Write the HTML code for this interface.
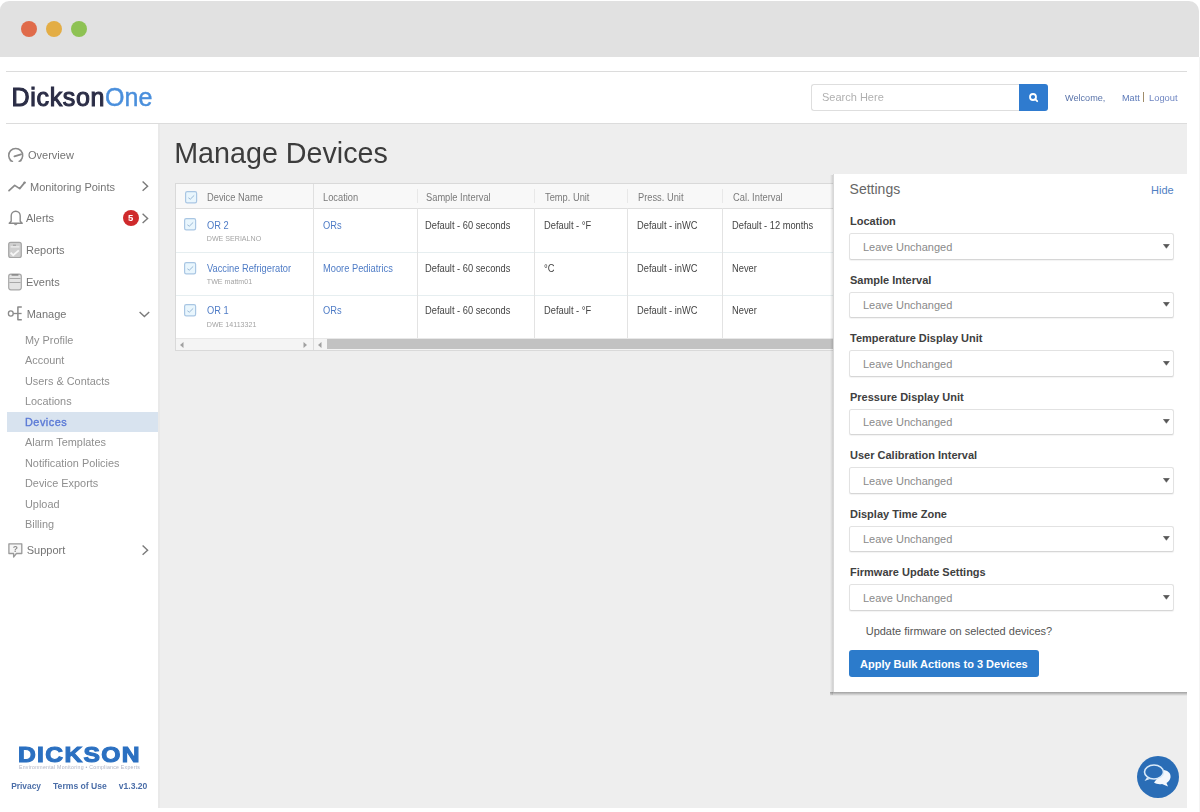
<!DOCTYPE html>
<html><head><meta charset="utf-8"><style>
html,body{margin:0;padding:0;}
body{width:1200px;height:812px;position:relative;overflow:hidden;background:#fff;font-family:"Liberation Sans", sans-serif;}
.t{position:absolute;white-space:nowrap;}
.r{position:absolute;box-sizing:border-box;}
</style></head><body><div id="root" style="position:absolute;left:0;top:0;width:1200px;height:812px;filter:blur(0.4px);">
<div class="r" style="left:0px;top:1px;width:1199px;height:56px;background:#e1e1e1;border-radius:9px 10px 0 0;"></div>
<div class="r" style="left:20.7px;top:20.7px;width:16.6px;height:16.6px;background:#e06b4a;border-radius:50%;"></div>
<div class="r" style="left:45.7px;top:20.7px;width:16.6px;height:16.6px;background:#e3ad45;border-radius:50%;"></div>
<div class="r" style="left:70.7px;top:20.7px;width:16.6px;height:16.6px;background:#8ec253;border-radius:50%;"></div>
<div class="r" style="left:1199px;top:57px;width:1px;height:755px;background:#f4f4f4;"></div>
<div class="r" style="left:6px;top:71px;width:1181px;height:1px;background:#dcdcdc;"></div>
<div class="r" style="left:6px;top:123px;width:1181px;height:1px;background:#dcdcdc;"></div>
<div class="t" style="left:11.60px;top:84.54px;font-size:25px;line-height:25px;font-weight:400;color:#2a2c45;"><span style="color:#2b2d46;-webkit-text-stroke:1.05px #2b2d46;letter-spacing:0.65px">Dickson</span><span style="color:#4a8fdc;-webkit-text-stroke:0.45px #4a8fdc">One</span></div>
<div class="r" style="left:811px;top:84px;width:208px;height:26px;background:#fff;border:1px solid #dedede;border-right:none;border-radius:3px 0 0 3px;box-sizing:border-box;width:208px;height:27px;"></div>
<div class="t" style="left:822.00px;top:91.69px;font-size:11px;line-height:11px;font-weight:400;color:#b0b0b0;">Search Here</div>
<div class="r" style="left:1019px;top:84px;width:29px;height:27px;background:#2f7bcf;border-radius:0 3px 3px 0;"></div>
<svg class="r" style="left:1027px;top:91px;" width="13" height="13" viewBox="0 0 13 13"><circle cx="6" cy="6" r="3" fill="none" stroke="#fff" stroke-width="1.8"/><line x1="8.2" y1="8.2" x2="10.2" y2="10.2" stroke="#fff" stroke-width="1.8" stroke-linecap="round"/></svg>
<div class="t" style="left:1065.00px;top:92.59px;font-size:9.7px;line-height:9.7px;font-weight:400;color:#5a74aa;transform:scaleX(0.94);transform-origin:0 0;">Welcome,</div>
<div class="t" style="left:1122.00px;top:92.59px;font-size:9.7px;line-height:9.7px;font-weight:400;color:#5a78b8;transform:scaleX(0.94);transform-origin:0 0;">Matt</div>
<div class="r" style="left:1143px;top:92px;width:1.3px;height:9.5px;background:#a08c6a;"></div>
<div class="t" style="left:1148.70px;top:92.59px;font-size:9.7px;line-height:9.7px;font-weight:400;color:#6f86c2;transform:scaleX(0.965);transform-origin:0 0;">Logout</div>
<div class="r" style="left:158px;top:124px;width:1029px;height:684px;background:#eeeeee;"></div>
<div class="r" style="left:158px;top:124px;width:2.2px;height:684px;background:#e9e9e9;"></div>
<div class="t" style="left:28.00px;top:150.09px;font-size:11px;line-height:11px;font-weight:400;color:#747474;">Overview</div>
<div class="t" style="left:30.00px;top:181.79px;font-size:11px;line-height:11px;font-weight:400;color:#747474;">Monitoring Points</div>
<div class="t" style="left:26.00px;top:213.49px;font-size:11px;line-height:11px;font-weight:400;color:#747474;">Alerts</div>
<div class="t" style="left:26.00px;top:245.19px;font-size:11px;line-height:11px;font-weight:400;color:#747474;">Reports</div>
<div class="t" style="left:26.00px;top:276.89px;font-size:11px;line-height:11px;font-weight:400;color:#747474;">Events</div>
<div class="t" style="left:26.70px;top:308.59px;font-size:11px;line-height:11px;font-weight:400;color:#747474;">Manage</div>
<svg class="r" style="left:0;top:0" width="158" height="600" viewBox="0 0 158 600">
<path d="M11.2 160.8 A7 7 0 1 1 20.2 160.8" fill="none" stroke="#8a8a8a" stroke-width="1.5" stroke-linecap="round"/>
<path d="M10.2 160.6 L12.6 161.4 M19 161.4 L21.2 160.6" stroke="#8a8a8a" stroke-width="1.3" stroke-linecap="round"/>
<path d="M14.4 156.3 L21 154.4" stroke="#8a8a8a" stroke-width="1.8" stroke-linecap="round"/>
<polyline points="9,190.6 14.7,185.4 19.7,188.6 24.6,182.6" fill="none" stroke="#8a8a8a" stroke-width="1.7" stroke-linejoin="round" stroke-linecap="round"/>
<circle cx="24.6" cy="182.6" r="1.2" fill="#8a8a8a"/>
<path d="M9.2 223.2 L11.2 221.2 L11.2 215.8 A4.5 4.5 0 0 1 20.2 215.8 L20.2 221.2 L22.2 223.2 Z" fill="none" stroke="#8a8a8a" stroke-width="1.4" stroke-linejoin="round"/>
<path d="M14.2 224 A1.6 1.2 0 0 0 17.2 224" fill="#8a8a8a" stroke="#8a8a8a" stroke-width="0.8"/>
<rect x="8.7" y="242.4" width="12.6" height="15.1" rx="2" fill="#cfcfcf" stroke="#a5a5a5" stroke-width="1.2"/>
<path d="M10.6 246.9 L19.4 246.9" stroke="#f4f4f4" stroke-width="1.1"/>
<path d="M13 245.2 L16 245.2" stroke="#9a9a9a" stroke-width="1"/>
<polyline points="10.6,252.6 13.2,255.2 18.8,250.4" fill="none" stroke="#f6f6f6" stroke-width="1.8"/>
<rect x="8.7" y="274.2" width="12.6" height="15.6" rx="2.2" fill="#e4e4e4" stroke="#a8a8a8" stroke-width="1.2"/>
<path d="M12.2 274.8 L17.8 274.8" stroke="#8c8c8c" stroke-width="1.8" stroke-linecap="round"/>
<path d="M9.4 278.5 L20.6 278.5 M9.4 282.5 L20.6 282.5" stroke="#a8a8a8" stroke-width="1"/>
<ellipse cx="10.8" cy="313.5" rx="2.4" ry="2.6" fill="none" stroke="#8a8a8a" stroke-width="1.3"/>
<path d="M13.2 313.5 L21.6 313.5" stroke="#8a8a8a" stroke-width="1.3"/>
<path d="M21.8 307.1 L17.9 307.1 L17.9 319.8 L21.8 319.8" fill="none" stroke="#8a8a8a" stroke-width="1.5" stroke-linejoin="round"/>
<path d="M8.9 543.8 L21.8 543.8 L21.8 553.5 L16.4 553.5 L13.6 557 L13.6 553.5 L8.9 553.5 Z" fill="#f6f6f6" stroke="#9a9a9a" stroke-width="1.3" stroke-linejoin="round"/>
<text x="15.4" y="551.6" font-size="8.5" font-family="Liberation Sans" font-weight="700" fill="#8a8a8a" text-anchor="middle">?</text>
<polyline points="142.6,181.6 147.6,186.2 142.6,190.8" fill="none" stroke="#7a7a7a" stroke-width="1.4"/>
<polyline points="142.6,213.8 147.6,218.4 142.6,223" fill="none" stroke="#7a7a7a" stroke-width="1.4"/>
<polyline points="142.6,545.6 147.6,550.2 142.6,554.8" fill="none" stroke="#7a7a7a" stroke-width="1.4"/>
<polyline points="139.6,312 144.4,316.6 149.2,312" fill="none" stroke="#7a7a7a" stroke-width="1.4"/>
</svg>
<div class="r" style="left:122.7px;top:210px;width:16px;height:16px;background:#cf2a2c;border-radius:50%;"></div>
<div class="t" style="left:127.90px;top:213.46px;font-size:9.5px;line-height:9.5px;font-weight:700;color:#fff;">5</div>
<div class="r" style="left:6.5px;top:412px;width:151.5px;height:20px;background:#d8e3ef;"></div>
<div class="t" style="left:25.00px;top:334.67px;font-size:10.9px;line-height:10.9px;font-weight:400;color:#8f8f8f;">My Profile</div>
<div class="t" style="left:25.00px;top:355.17px;font-size:10.9px;line-height:10.9px;font-weight:400;color:#8f8f8f;">Account</div>
<div class="t" style="left:25.00px;top:375.67px;font-size:10.9px;line-height:10.9px;font-weight:400;color:#8f8f8f;">Users &amp; Contacts</div>
<div class="t" style="left:25.00px;top:396.17px;font-size:10.9px;line-height:10.9px;font-weight:400;color:#8f8f8f;">Locations</div>
<div class="t" style="left:25.00px;top:416.67px;font-size:10.9px;line-height:10.9px;font-weight:400;color:#5a79d6;-webkit-text-stroke:0.35px #5a79d6;letter-spacing:0.5px;">Devices</div>
<div class="t" style="left:25.00px;top:437.17px;font-size:10.9px;line-height:10.9px;font-weight:400;color:#8f8f8f;">Alarm Templates</div>
<div class="t" style="left:25.00px;top:457.67px;font-size:10.9px;line-height:10.9px;font-weight:400;color:#8f8f8f;">Notification Policies</div>
<div class="t" style="left:25.00px;top:478.17px;font-size:10.9px;line-height:10.9px;font-weight:400;color:#8f8f8f;">Device Exports</div>
<div class="t" style="left:25.00px;top:498.67px;font-size:10.9px;line-height:10.9px;font-weight:400;color:#8f8f8f;">Upload</div>
<div class="t" style="left:25.00px;top:519.17px;font-size:10.9px;line-height:10.9px;font-weight:400;color:#8f8f8f;">Billing</div>
<div class="t" style="left:26.70px;top:545.29px;font-size:11px;line-height:11px;font-weight:400;color:#747474;">Support</div>
<div class="t" style="left:18.40px;top:743.91px;font-size:22.2px;line-height:22.2px;font-weight:700;color:#2b70c1;-webkit-text-stroke:1.1px #2b70c1;letter-spacing:1.2px;transform:scaleX(1.11);transform-origin:0 0;">DICKSON</div>
<div class="t" style="left:19.00px;top:764.90px;font-size:5.2px;line-height:5.2px;font-weight:400;color:#b0b4c4;letter-spacing:0.25px;">Environmental Monitoring • Compliance Experts</div>
<div class="t" style="left:11.20px;top:781.89px;font-size:8.4px;line-height:8.4px;font-weight:700;color:#4b6ea8;">Privacy</div>
<div class="t" style="left:53.00px;top:781.72px;font-size:8.6px;line-height:8.6px;font-weight:700;color:#4b6ea8;">Terms of Use</div>
<div class="t" style="left:118.70px;top:781.72px;font-size:8.6px;line-height:8.6px;font-weight:700;color:#4b6ea8;">v1.3.20</div>
<div class="t" style="left:174.20px;top:138.81px;font-size:28.7px;line-height:28.7px;font-weight:400;color:#3c3c3c;">Manage Devices</div>
<div class="r" style="left:175px;top:183px;width:660px;height:168px;background:#fff;border:1px solid #d9d9d9;"></div>
<div class="r" style="left:176px;top:184px;width:658px;height:24.5px;background:#f8f8f8;border-bottom:1px solid #dddddd;"></div>
<div class="r" style="left:176px;top:252px;width:658px;height:1px;background:#e6eef0;"></div>
<div class="r" style="left:176px;top:295px;width:658px;height:1px;background:#e6eef0;"></div>
<div class="r" style="left:313px;top:208px;width:1px;height:130px;background:#e3e3e3;"></div>
<div class="r" style="left:417px;top:208px;width:1px;height:130px;background:#e3e3e3;"></div>
<div class="r" style="left:534px;top:208px;width:1px;height:130px;background:#e3e3e3;"></div>
<div class="r" style="left:627px;top:208px;width:1px;height:130px;background:#e3e3e3;"></div>
<div class="r" style="left:722px;top:208px;width:1px;height:130px;background:#e3e3e3;"></div>
<div class="r" style="left:313px;top:184px;width:1.2px;height:24px;background:#e0e0e0;"></div>
<div class="r" style="left:417px;top:189px;width:1px;height:14px;background:#e8e8e8;"></div>
<div class="r" style="left:534px;top:189px;width:1px;height:14px;background:#e8e8e8;"></div>
<div class="r" style="left:627px;top:189px;width:1px;height:14px;background:#e8e8e8;"></div>
<div class="r" style="left:722px;top:189px;width:1px;height:14px;background:#e8e8e8;"></div>
<div class="r" style="left:176px;top:338px;width:658px;height:12px;background:#f4f4f4;border-top:1px solid #e8e8e8;"></div>
<div class="r" style="left:313px;top:338px;width:1.2px;height:12px;background:#dcdcdc;"></div>
<div class="r" style="left:327px;top:339px;width:510px;height:10px;background:#c2c2c2;"></div>
<svg class="r" style="left:179px;top:341px;" width="6" height="8" viewBox="0 0 6 8"><polygon points="4.5,1 1,4 4.5,7" fill="#a0a0a0"/></svg>
<svg class="r" style="left:302px;top:341px;" width="6" height="8" viewBox="0 0 6 8"><polygon points="1.5,1 5,4 1.5,7" fill="#a0a0a0"/></svg>
<svg class="r" style="left:317px;top:341px;" width="6" height="8" viewBox="0 0 6 8"><polygon points="4.5,1 1,4 4.5,7" fill="#a0a0a0"/></svg>
<svg class="r" style="left:185.1px;top:191.2px;" width="13" height="13" viewBox="0 0 13 13"><rect x="0.6" y="0.6" width="11" height="11.2" rx="1.6" fill="#e9f6fd" stroke="#a9c6e3" stroke-width="1.2"/><polyline points="3.4,6.8 5.3,8.2 9.2,4.4" fill="none" stroke="#9ab8d6" stroke-width="1"/></svg>
<svg class="r" style="left:184.4px;top:217.8px;" width="13" height="13" viewBox="0 0 13 13"><rect x="0.6" y="0.6" width="11" height="11.2" rx="1.6" fill="#e9f6fd" stroke="#a9c6e3" stroke-width="1.2"/><polyline points="3.4,6.8 5.3,8.2 9.2,4.4" fill="none" stroke="#9ab8d6" stroke-width="1"/></svg>
<svg class="r" style="left:184.2px;top:262.1px;" width="13" height="13" viewBox="0 0 13 13"><rect x="0.6" y="0.6" width="11" height="11.2" rx="1.6" fill="#e9f6fd" stroke="#a9c6e3" stroke-width="1.2"/><polyline points="3.4,6.8 5.3,8.2 9.2,4.4" fill="none" stroke="#9ab8d6" stroke-width="1"/></svg>
<svg class="r" style="left:184.2px;top:304.2px;" width="13" height="13" viewBox="0 0 13 13"><rect x="0.6" y="0.6" width="11" height="11.2" rx="1.6" fill="#e9f6fd" stroke="#a9c6e3" stroke-width="1.2"/><polyline points="3.4,6.8 5.3,8.2 9.2,4.4" fill="none" stroke="#9ab8d6" stroke-width="1"/></svg>
<div class="t" style="left:207.30px;top:193.03px;font-size:10px;line-height:10px;font-weight:400;color:#7a7a7a;transform:scaleX(0.93);transform-origin:0 0;">Device Name</div>
<div class="t" style="left:323.00px;top:193.03px;font-size:10px;line-height:10px;font-weight:400;color:#7a7a7a;transform:scaleX(0.93);transform-origin:0 0;">Location</div>
<div class="t" style="left:426.00px;top:193.03px;font-size:10px;line-height:10px;font-weight:400;color:#7a7a7a;transform:scaleX(0.93);transform-origin:0 0;">Sample Interval</div>
<div class="t" style="left:544.70px;top:193.03px;font-size:10px;line-height:10px;font-weight:400;color:#7a7a7a;transform:scaleX(0.93);transform-origin:0 0;">Temp. Unit</div>
<div class="t" style="left:638.00px;top:193.03px;font-size:10px;line-height:10px;font-weight:400;color:#7a7a7a;transform:scaleX(0.93);transform-origin:0 0;">Press. Unit</div>
<div class="t" style="left:732.70px;top:193.03px;font-size:10px;line-height:10px;font-weight:400;color:#7a7a7a;transform:scaleX(0.93);transform-origin:0 0;">Cal. Interval</div>
<div class="t" style="left:206.50px;top:220.73px;font-size:10px;line-height:10px;font-weight:400;color:#4f7cc6;transform:scaleX(0.93);transform-origin:0 0;">OR 2</div>
<div class="t" style="left:206.80px;top:236.29px;font-size:7.1px;line-height:7.1px;font-weight:400;color:#a4a4a4;">DWE SERIALNO</div>
<div class="t" style="left:322.70px;top:220.73px;font-size:10px;line-height:10px;font-weight:400;color:#4f7cc6;transform:scaleX(0.93);transform-origin:0 0;">ORs</div>
<div class="t" style="left:425.40px;top:220.73px;font-size:10px;line-height:10px;font-weight:400;color:#444;transform:scaleX(0.93);transform-origin:0 0;">Default - 60 seconds</div>
<div class="t" style="left:544.30px;top:220.73px;font-size:10px;line-height:10px;font-weight:400;color:#444;transform:scaleX(0.93);transform-origin:0 0;">Default - °F</div>
<div class="t" style="left:637.30px;top:220.73px;font-size:10px;line-height:10px;font-weight:400;color:#444;transform:scaleX(0.93);transform-origin:0 0;">Default - inWC</div>
<div class="t" style="left:731.80px;top:220.73px;font-size:10px;line-height:10px;font-weight:400;color:#444;transform:scaleX(0.93);transform-origin:0 0;">Default - 12 months</div>
<div class="t" style="left:206.50px;top:263.73px;font-size:10px;line-height:10px;font-weight:400;color:#4f7cc6;transform:scaleX(0.93);transform-origin:0 0;">Vaccine Refrigerator</div>
<div class="t" style="left:206.80px;top:279.49px;font-size:7.1px;line-height:7.1px;font-weight:400;color:#a4a4a4;">TWE mattm01</div>
<div class="t" style="left:322.70px;top:263.73px;font-size:10px;line-height:10px;font-weight:400;color:#4f7cc6;transform:scaleX(0.93);transform-origin:0 0;">Moore Pediatrics</div>
<div class="t" style="left:425.40px;top:263.73px;font-size:10px;line-height:10px;font-weight:400;color:#444;transform:scaleX(0.93);transform-origin:0 0;">Default - 60 seconds</div>
<div class="t" style="left:544.30px;top:263.73px;font-size:10px;line-height:10px;font-weight:400;color:#444;transform:scaleX(0.93);transform-origin:0 0;">°C</div>
<div class="t" style="left:637.30px;top:263.73px;font-size:10px;line-height:10px;font-weight:400;color:#444;transform:scaleX(0.93);transform-origin:0 0;">Default - inWC</div>
<div class="t" style="left:731.80px;top:263.73px;font-size:10px;line-height:10px;font-weight:400;color:#444;transform:scaleX(0.93);transform-origin:0 0;">Never</div>
<div class="t" style="left:206.50px;top:305.73px;font-size:10px;line-height:10px;font-weight:400;color:#4f7cc6;transform:scaleX(0.93);transform-origin:0 0;">OR 1</div>
<div class="t" style="left:206.80px;top:322.19px;font-size:7.1px;line-height:7.1px;font-weight:400;color:#a4a4a4;">DWE 14113321</div>
<div class="t" style="left:322.70px;top:305.73px;font-size:10px;line-height:10px;font-weight:400;color:#4f7cc6;transform:scaleX(0.93);transform-origin:0 0;">ORs</div>
<div class="t" style="left:425.40px;top:305.73px;font-size:10px;line-height:10px;font-weight:400;color:#444;transform:scaleX(0.93);transform-origin:0 0;">Default - 60 seconds</div>
<div class="t" style="left:544.30px;top:305.73px;font-size:10px;line-height:10px;font-weight:400;color:#444;transform:scaleX(0.93);transform-origin:0 0;">Default - °F</div>
<div class="t" style="left:637.30px;top:305.73px;font-size:10px;line-height:10px;font-weight:400;color:#444;transform:scaleX(0.93);transform-origin:0 0;">Default - inWC</div>
<div class="t" style="left:731.80px;top:305.73px;font-size:10px;line-height:10px;font-weight:400;color:#444;transform:scaleX(0.93);transform-origin:0 0;">Never</div>
<div class="r" style="left:830px;top:175px;width:3px;height:520px;background:linear-gradient(to right, rgba(0,0,0,0), rgba(0,0,0,0.13));"></div>
<div class="r" style="left:830px;top:692px;width:357px;height:4px;background:linear-gradient(to bottom, rgba(0,0,0,0.33), rgba(0,0,0,0.0));"></div>
<div class="r" style="left:832.5px;top:174px;width:354.5px;height:518px;background:#fff;border-left:1px solid #d8d8d8;"></div>
<div class="t" style="left:849.60px;top:182.15px;font-size:14px;line-height:14px;font-weight:400;color:#666;">Settings</div>
<div class="t" style="left:1151.00px;top:184.69px;font-size:11px;line-height:11px;font-weight:400;color:#4f80c3;">Hide</div>
<div class="t" style="left:850.00px;top:216.19px;font-size:11px;line-height:11px;font-weight:700;color:#404040;">Location</div>
<div class="r" style="left:849px;top:233.2px;width:325px;height:26.6px;background:#fff;border:1px solid #e2e2e2;border-bottom-color:#d6d6d6;border-radius:2.5px;box-shadow:0 1px 1px rgba(0,0,0,0.05);"></div>
<div class="t" style="left:863.00px;top:241.79px;font-size:11px;line-height:11px;font-weight:400;color:#8a8a8a;">Leave Unchanged</div>
<svg class="r" style="left:1162.5px;top:243.5px;" width="7" height="5" viewBox="0 0 7 5"><polygon points="0.4,0.3 6.4,0.3 3.4,4.3" fill="#555" stroke="#555" stroke-width="0.5" stroke-linejoin="round"/></svg>
<div class="t" style="left:850.00px;top:274.69px;font-size:11px;line-height:11px;font-weight:700;color:#404040;">Sample Interval</div>
<div class="r" style="left:849px;top:291.7px;width:325px;height:26.6px;background:#fff;border:1px solid #e2e2e2;border-bottom-color:#d6d6d6;border-radius:2.5px;box-shadow:0 1px 1px rgba(0,0,0,0.05);"></div>
<div class="t" style="left:863.00px;top:300.29px;font-size:11px;line-height:11px;font-weight:400;color:#8a8a8a;">Leave Unchanged</div>
<svg class="r" style="left:1162.5px;top:302.0px;" width="7" height="5" viewBox="0 0 7 5"><polygon points="0.4,0.3 6.4,0.3 3.4,4.3" fill="#555" stroke="#555" stroke-width="0.5" stroke-linejoin="round"/></svg>
<div class="t" style="left:850.00px;top:333.19px;font-size:11px;line-height:11px;font-weight:700;color:#404040;">Temperature Display Unit</div>
<div class="r" style="left:849px;top:350.2px;width:325px;height:26.6px;background:#fff;border:1px solid #e2e2e2;border-bottom-color:#d6d6d6;border-radius:2.5px;box-shadow:0 1px 1px rgba(0,0,0,0.05);"></div>
<div class="t" style="left:863.00px;top:358.79px;font-size:11px;line-height:11px;font-weight:400;color:#8a8a8a;">Leave Unchanged</div>
<svg class="r" style="left:1162.5px;top:360.5px;" width="7" height="5" viewBox="0 0 7 5"><polygon points="0.4,0.3 6.4,0.3 3.4,4.3" fill="#555" stroke="#555" stroke-width="0.5" stroke-linejoin="round"/></svg>
<div class="t" style="left:850.00px;top:391.69px;font-size:11px;line-height:11px;font-weight:700;color:#404040;">Pressure Display Unit</div>
<div class="r" style="left:849px;top:408.7px;width:325px;height:26.6px;background:#fff;border:1px solid #e2e2e2;border-bottom-color:#d6d6d6;border-radius:2.5px;box-shadow:0 1px 1px rgba(0,0,0,0.05);"></div>
<div class="t" style="left:863.00px;top:417.29px;font-size:11px;line-height:11px;font-weight:400;color:#8a8a8a;">Leave Unchanged</div>
<svg class="r" style="left:1162.5px;top:419.0px;" width="7" height="5" viewBox="0 0 7 5"><polygon points="0.4,0.3 6.4,0.3 3.4,4.3" fill="#555" stroke="#555" stroke-width="0.5" stroke-linejoin="round"/></svg>
<div class="t" style="left:850.00px;top:450.19px;font-size:11px;line-height:11px;font-weight:700;color:#404040;">User Calibration Interval</div>
<div class="r" style="left:849px;top:467.2px;width:325px;height:26.6px;background:#fff;border:1px solid #e2e2e2;border-bottom-color:#d6d6d6;border-radius:2.5px;box-shadow:0 1px 1px rgba(0,0,0,0.05);"></div>
<div class="t" style="left:863.00px;top:475.79px;font-size:11px;line-height:11px;font-weight:400;color:#8a8a8a;">Leave Unchanged</div>
<svg class="r" style="left:1162.5px;top:477.5px;" width="7" height="5" viewBox="0 0 7 5"><polygon points="0.4,0.3 6.4,0.3 3.4,4.3" fill="#555" stroke="#555" stroke-width="0.5" stroke-linejoin="round"/></svg>
<div class="t" style="left:850.00px;top:508.69px;font-size:11px;line-height:11px;font-weight:700;color:#404040;">Display Time Zone</div>
<div class="r" style="left:849px;top:525.7px;width:325px;height:26.6px;background:#fff;border:1px solid #e2e2e2;border-bottom-color:#d6d6d6;border-radius:2.5px;box-shadow:0 1px 1px rgba(0,0,0,0.05);"></div>
<div class="t" style="left:863.00px;top:534.29px;font-size:11px;line-height:11px;font-weight:400;color:#8a8a8a;">Leave Unchanged</div>
<svg class="r" style="left:1162.5px;top:536.0px;" width="7" height="5" viewBox="0 0 7 5"><polygon points="0.4,0.3 6.4,0.3 3.4,4.3" fill="#555" stroke="#555" stroke-width="0.5" stroke-linejoin="round"/></svg>
<div class="t" style="left:850.00px;top:567.19px;font-size:11px;line-height:11px;font-weight:700;color:#404040;">Firmware Update Settings</div>
<div class="r" style="left:849px;top:584.2px;width:325px;height:26.6px;background:#fff;border:1px solid #e2e2e2;border-bottom-color:#d6d6d6;border-radius:2.5px;box-shadow:0 1px 1px rgba(0,0,0,0.05);"></div>
<div class="t" style="left:863.00px;top:592.79px;font-size:11px;line-height:11px;font-weight:400;color:#8a8a8a;">Leave Unchanged</div>
<svg class="r" style="left:1162.5px;top:594.5px;" width="7" height="5" viewBox="0 0 7 5"><polygon points="0.4,0.3 6.4,0.3 3.4,4.3" fill="#555" stroke="#555" stroke-width="0.5" stroke-linejoin="round"/></svg>
<div class="t" style="left:865.70px;top:625.79px;font-size:11px;line-height:11px;font-weight:400;color:#555;">Update firmware on selected devices?</div>
<div class="r" style="left:849px;top:650px;width:190px;height:26.5px;background:#2c7bcb;border-radius:3px;"></div>
<div class="t" style="left:860.00px;top:658.79px;font-size:11px;line-height:11px;font-weight:700;color:#fff;">Apply Bulk Actions to 3 Devices</div>
<div class="r" style="left:1137.3px;top:755.5px;width:42px;height:42px;background:#2a6db6;border-radius:50%;"></div>
<svg class="r" style="left:1140px;top:760px;" width="36" height="32" viewBox="0 0 36 32"><path d="M24 10 C29 11 31 14 30.5 17.5 C30 20 28.5 22 26.5 23 L28 26.5 L22 24 C19 24.5 16 24 14 22.5 Z" fill="#f4f8fd"/><ellipse cx="14" cy="12" rx="9.5" ry="7" fill="#2a6db6" stroke="#d9eaf9" stroke-width="1.6"/><path d="M7 17.5 L4.5 21 L10 19" fill="#d9eaf9"/></svg>
</div></body></html>
